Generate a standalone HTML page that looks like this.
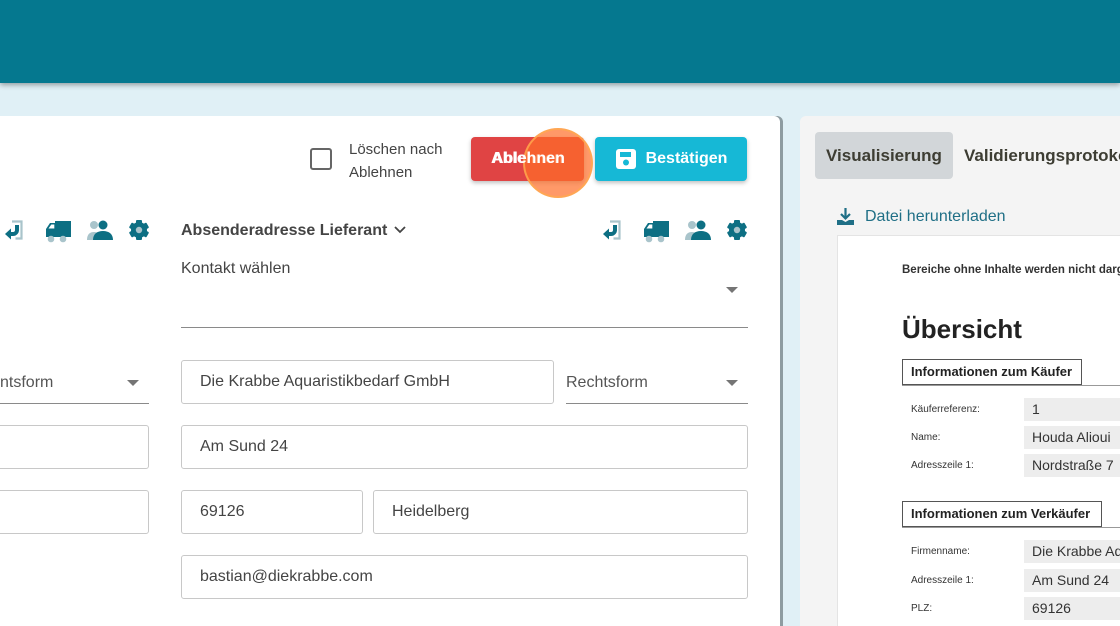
<!DOCTYPE html><html><head><meta charset="utf-8"><style>
*{box-sizing:border-box;margin:0;padding:0}
html,body{width:1120px;height:626px;overflow:hidden}
body{background:#e0f0f6;font-family:"Liberation Sans",sans-serif;color:#3d3d33;position:relative}
.hdr{position:absolute;left:0;top:0;width:1120px;height:83px;background:#05788f;box-shadow:0 2px 5px rgba(0,0,0,.35)}
.card{position:absolute;left:-10px;top:116px;width:790px;height:510px;background:#fff;border-radius:6px 6px 0 0;box-shadow:3px 0 0 #8e9ca1}
.abs{position:absolute}
.inp{position:absolute;border:1px solid #c8c8c8;border-radius:3px;background:#fff;font-size:16px;padding-left:18px;display:flex;align-items:center;color:#444}
.sel{position:absolute;border-bottom:1px solid #8a8a8a;font-size:16px;color:#555}
.tri{position:absolute;width:0;height:0;border-left:6px solid transparent;border-right:6px solid transparent;border-top:6px solid #757575}
.btn{position:absolute;height:44px;border-radius:4px;color:#fff;font-weight:bold;font-size:16px;display:flex;align-items:center;justify-content:center;box-shadow:0 2px 4px rgba(0,0,0,.25)}
.rp{position:absolute;left:800px;top:116px;width:340px;height:510px;background:#f4f4f4;border-radius:6px 6px 0 0}
.doc{position:absolute;left:837px;top:235px;width:300px;height:391px;background:#fff;border:1px solid #e4e4e4;border-bottom:none}
.lb{position:absolute;font-size:10px;color:#333}
.vf{position:absolute;left:1024px;width:110px;height:23px;background:#ededed;font-size:14px;color:#333;padding:3px 0 0 8px;white-space:nowrap;overflow:hidden}
.box{position:absolute;border:1px solid #555;font-size:13px;font-weight:bold;color:#222;padding:4px 8px;background:#fff}
</style></head><body>
<div class="hdr"></div>
<div class="card"></div>
<div class="abs" style="left:310px;top:148px;width:22px;height:22px;border:2px solid #666;border-radius:3px"></div>
<div class="abs" style="left:349px;top:138px;font-size:15px;line-height:23px;color:#444">Löschen nach<br>Ablehnen</div>
<div class="btn" style="left:471px;top:137px;width:113px;background:#e04444">Ablehnen</div>
<div class="btn" style="left:595px;top:137px;width:152px;background:#16b8d6"><svg width="22" height="22" viewBox="0 0 22 22" style="margin-right:9px"><rect x="1" y="1" width="20" height="20" rx="3" fill="#fff"/><rect x="5" y="4" width="11" height="5" fill="#16b8d6"/><circle cx="11" cy="14.5" r="3" fill="#16b8d6"/></svg>Bestätigen</div>
<div class="abs" style="left:523px;top:128px;width:70px;height:70px;border-radius:50%;background:rgba(255,110,40,.7);border:2px solid rgba(255,170,80,.8)"></div>
<div class="abs" style="left:492px;top:150px;font-size:16px;font-weight:bold;color:#fff">Ablehnen</div>

<svg class="abs" style="left:0;top:216px" width="160" height="30" viewBox="0 0 160 30">
<g id="icons">
<path d="M12 5.5h9.5v17h-6" fill="none" stroke="#a9c4cb" stroke-width="2.2"/>
<path d="M17 9v5a4 4 0 0 1-4 4H10" fill="none" stroke="#0d6f83" stroke-width="4"/><path d="M5 18l6-5.5v11z" fill="#0d6f83"/>
<path d="M46 13l4-6h5v-2h16v16H46z" fill="#0d6f83"/><path d="M48.5 12.5l2.8-4h3v4z" fill="#fff"/><circle cx="51" cy="23" r="3.3" fill="#a9c4cb"/><circle cx="63" cy="23" r="3.3" fill="#a9c4cb"/>
<circle cx="94" cy="9" r="4" fill="#a9c4cb"/><path d="M87 24c0-6 3-8 7-8s5 2 5 4v4z" fill="#a9c4cb"/>
<circle cx="103" cy="9" r="4.5" fill="#0d6f83"/><path d="M93 24c0-6 4-9 10-9s10 3 10 9z" fill="#0d6f83"/>
<g transform="translate(139 14)"><circle r="8" fill="#0d6f83"/><g fill="#0d6f83"><rect x="-3" y="-10" width="6" height="20" rx="1"/><rect x="-3" y="-10" width="6" height="20" rx="1" transform="rotate(60)"/><rect x="-3" y="-10" width="6" height="20" rx="1" transform="rotate(120)"/></g><circle r="3.2" fill="#a9c4cb"/></g>
</g></svg>
<svg class="abs" style="left:598px;top:216px" width="160" height="30" viewBox="0 0 160 30"><use href="#icons"/></svg>

<div class="abs" style="left:181px;top:222px;font-size:16px;font-weight:bold;color:#444">Absenderadresse Lieferant</div>
<svg class="abs" style="left:393px;top:225px" width="14" height="10"><path d="M2 2l5 5 5-5" fill="none" stroke="#444" stroke-width="1.8"/></svg>
<div class="abs" style="left:181px;top:260px;font-size:16px;color:#444">Kontakt wählen</div>
<div class="abs" style="left:181px;top:327px;width:567px;border-top:1px solid #8a8a8a"></div>
<div class="tri" style="left:726px;top:287px"></div>

<div class="sel" style="left:0;top:366px;width:149px;height:38px;padding-top:8px">ntsform</div><div class="tri" style="left:127px;top:380px"></div>
<div class="inp" style="left:181px;top:360px;width:373px;height:44px">Die Krabbe Aquaristikbedarf GmbH</div>
<div class="sel" style="left:566px;top:366px;width:182px;height:38px;padding-top:8px">Rechtsform</div><div class="tri" style="left:726px;top:380px"></div>
<div class="inp" style="left:-10px;top:425px;width:159px;height:44px"></div>
<div class="inp" style="left:181px;top:425px;width:567px;height:44px">Am Sund 24</div>
<div class="inp" style="left:-10px;top:490px;width:159px;height:44px"></div>
<div class="inp" style="left:181px;top:490px;width:182px;height:44px">69126</div>
<div class="inp" style="left:373px;top:490px;width:375px;height:44px">Heidelberg</div>
<div class="inp" style="left:181px;top:555px;width:567px;height:44px">bastian@diekrabbe.com</div>

<div class="rp"></div>
<div class="abs" style="left:815px;top:132px;width:138px;height:47px;background:#d2d6d9;border-radius:4px"></div>
<div class="abs" style="left:826px;top:146px;font-size:17px;font-weight:bold;color:#3d3d33">Visualisierung</div>
<div class="abs" style="left:964px;top:146px;font-size:17px;font-weight:bold;color:#3d3d33;white-space:nowrap">Validierungsprotokoll</div>
<svg class="abs" style="left:836px;top:207px" width="19" height="19"><path d="M9.5 1v10M5 7l4.5 4.5L14 7" fill="none" stroke="#1f6f86" stroke-width="2.2"/><path d="M1 13h5l3.5 2 3.5-2h5v5H1z" fill="#1f6f86"/></svg>
<div class="abs" style="left:865px;top:208px;font-size:16px;color:#1f6f86">Datei herunterladen</div>
<div class="doc"></div>
<div class="abs" style="left:902px;top:264px;font-size:11.5px;font-weight:bold;color:#333;white-space:nowrap">Bereiche ohne Inhalte werden nicht dargestellt</div>
<div class="abs" style="left:902px;top:314px;font-size:26px;font-weight:bold;color:#222">Übersicht</div>
<div class="box" style="left:902px;top:359px;width:180px;height:26px">Informationen zum Käufer</div>
<div class="abs" style="left:902px;top:385px;width:230px;border-top:1px solid #999"></div>
<div class="lb" style="left:911px;top:404px">Käuferreferenz:</div><div class="vf" style="top:398px">1</div>
<div class="lb" style="left:911px;top:432px">Name:</div><div class="vf" style="top:426px">Houda Alioui</div>
<div class="lb" style="left:911px;top:460px">Adresszeile 1:</div><div class="vf" style="top:454px">Nordstraße 7</div>
<div class="box" style="left:902px;top:501px;width:200px;height:26px">Informationen zum Verkäufer</div>
<div class="abs" style="left:902px;top:527px;width:230px;border-top:1px solid #999"></div>
<div class="lb" style="left:911px;top:546px">Firmenname:</div><div class="vf" style="top:540px">Die Krabbe Aquaristik</div>
<div class="lb" style="left:911px;top:575px">Adresszeile 1:</div><div class="vf" style="top:569px">Am Sund 24</div>
<div class="lb" style="left:911px;top:603px">PLZ:</div><div class="vf" style="top:597px">69126</div>
</body></html>
